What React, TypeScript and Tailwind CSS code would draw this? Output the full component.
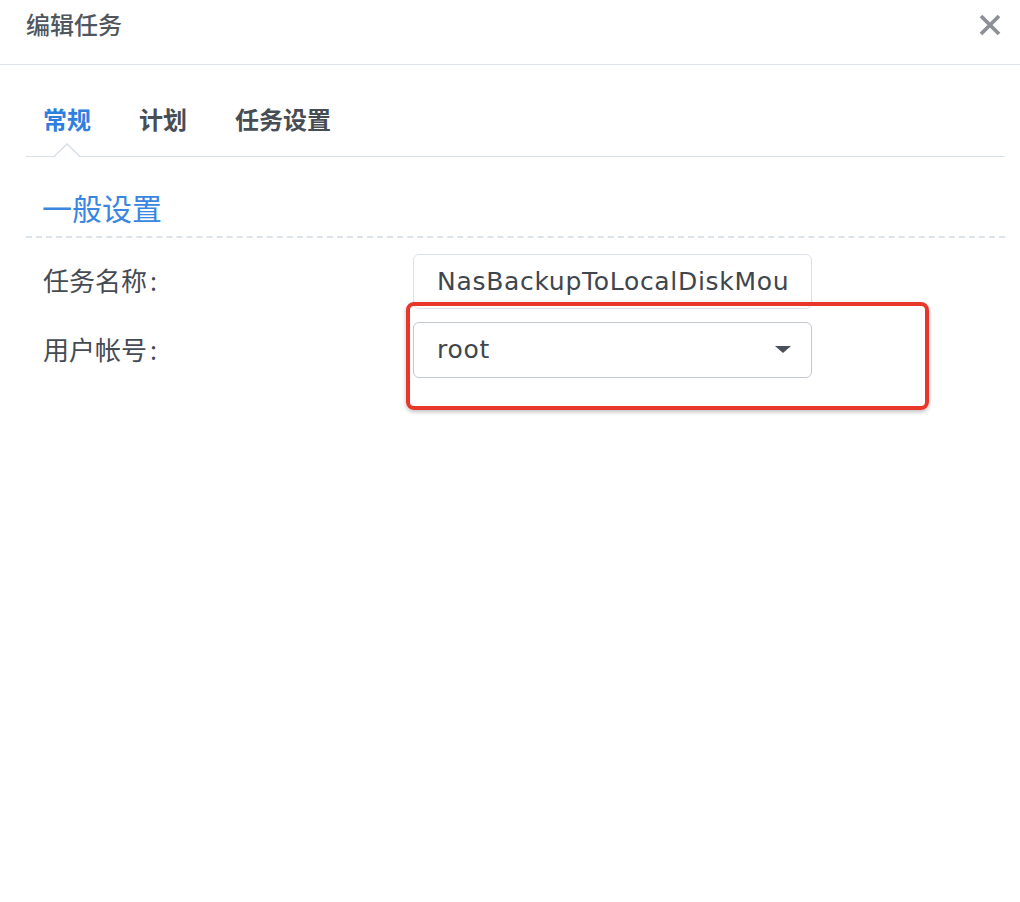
import React from "react";

const font = { fontFamily: '"Noto Sans", "Noto Sans CJK SC", sans-serif' };
const latin = { fontFamily: '"DejaVu Sans", "Noto Sans CJK SC", sans-serif' };

export default function App() {
  return (
    <div className="relative w-[1020px] h-[902px] bg-white overflow-hidden" style={font}>
      {/* Header */}
      <div className="flex h-[65px] items-center justify-between border-b border-[#dfe4ea] pl-[26px] pr-[18px]">
        <div className="text-[24px] leading-none text-[#50565e] font-medium -mt-[14px]">编辑任务</div>
        <svg width="24" height="24" viewBox="0 0 24 24" className="-mt-[14px]">
          <path d="M3 3 L21 21 M21 3 L3 21" stroke="#8c9096" strokeWidth="3.8" strokeLinecap="butt" />
        </svg>
      </div>

      <div className="pl-[26px] pr-[15px]">
        {/* Tabs */}
        <div className="relative flex h-[92px] items-center gap-[48px] border-b border-[#d8dfe7] pl-[17px] pt-[18px]">
          <div className="text-[24px] font-bold text-[#2f80de]">常规</div>
          <div className="text-[24px] font-bold text-[#474d55]">计划</div>
          <div className="text-[24px] font-bold text-[#474d55]">任务设置</div>
          <svg width="26" height="14" viewBox="0 0 26 14" className="absolute left-[28px] bottom-[-1px]">
            <path d="M0 13.5 L13 1 L26 13.5" fill="white" stroke="#d8dfe7" strokeWidth="1.4" />
            <rect x="2" y="13" width="22" height="1" fill="white" />
          </svg>
        </div>

        {/* Section title */}
        <div className="flex h-[81px] items-end pb-[12px] pl-[16px] border-b-[2px] border-dashed border-[#dde3ea]">
          <div className="text-[30px] leading-none text-[#3a86e0]">一般设置</div>
        </div>

        {/* Form */}
        <div className="flex flex-col gap-[13px] pt-[16px]">
          <div className="flex items-center">
            <div className="w-[387px] pl-[17px] text-[26px] text-[#444b53]">
              任务名称<span className="ml-[3px]">:</span>
            </div>
            <div
              className="flex h-[55px] w-[399px] items-center overflow-hidden whitespace-nowrap rounded-[6px] border border-[#dbe1e8] pl-[23px] text-[25px] tracking-[0.7px] text-[#3f464e]"
              style={latin}
            >
              NasBackupToLocalDiskMou
            </div>
          </div>
          <div className="flex items-center">
            <div className="w-[387px] pl-[17px] text-[26px] text-[#444b53]">
              用户帐号<span className="ml-[3px]">:</span>
            </div>
            <div
              className="flex h-[56px] w-[399px] items-center justify-between rounded-[6px] border border-[#c4c9cf] pl-[23px] pr-[20px] text-[25px] tracking-[0.7px] text-[#3f464e]"
              style={latin}
            >
              <span>root</span>
              <svg width="16" height="8" viewBox="0 0 16 8">
                <path d="M0 0 L16 0 L8 7 Z" fill="#4a5058" />
              </svg>
            </div>
          </div>
        </div>
      </div>

      {/* Red annotation box */}
      <div className="absolute left-[406px] top-[302px] h-[108px] w-[523px] rounded-[8px] border-[4px] border-[#e8372a] shadow-[0_2px_4px_rgba(0,0,0,0.25)]" />
    </div>
  );
}
